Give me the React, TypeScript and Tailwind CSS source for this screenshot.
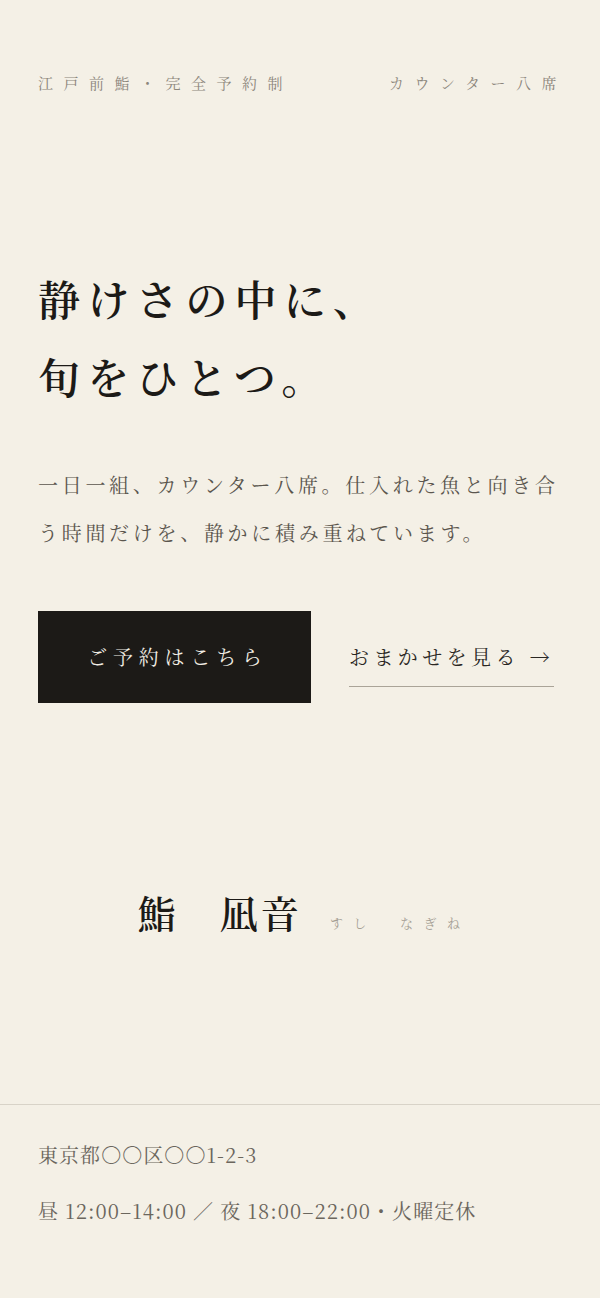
const serif = '"Noto Serif CJK JP", "Liberation Serif", serif';

export default function App() {
  return (
    <div
      className="min-h-screen bg-[#f4f0e6] text-[#1c1a17]"
      style={{ fontFamily: serif }}
    >
      <header className="flex justify-between pl-[38px] pr-[33px] pt-[72px] text-[15px] leading-[22px] tracking-[0.7em] text-[#8c867c]">
        <span>江戸前鮨・完全予約制</span>
        <span>カウンター八席</span>
      </header>

      <main className="px-[38px]">
        <h1 className="mt-[165px] text-[42px] font-semibold leading-[78px] tracking-[0.17em]">
          静けさの中に、
          <br />
          旬をひとつ。
        </h1>

        <p className="mt-[46px] text-[20px] leading-[48px] tracking-[0.185em] text-[#5b564e]">
          一日一組、カウンター八席。仕入れた魚と向き合う時間だけを、静かに積み重ねています。
        </p>

        <div className="mt-[54px] flex items-center gap-[38px]">
          <a className="flex h-[92px] w-[273px] items-center justify-center bg-[#1c1a17] pl-[6px] text-[20px] tracking-[0.29em] text-[#f1ede4]">
            ご予約はこちら
          </a>
          <a className="flex w-[205px] items-center border-b-[1.5px] border-[#aaa498] py-[14px] text-[20px] tracking-[0.22em] text-[#2a2723]">
            <span>おまかせを見る</span>
            <span className="ml-[10px] tracking-normal">→</span>
          </a>
        </div>
      </main>

      <section className="mt-[184px] flex items-baseline justify-center pl-[8px]">
        <span className="text-[38px] font-semibold leading-[50px] tracking-[0.08em]">
          鮨　凪音
        </span>
        <span className="ml-[28px] text-[13px] tracking-[0.8em] text-[#a39d92]">
          すし　なぎね
        </span>
      </section>

      <footer className="mt-[167px] border-t border-[#d8d3c8] px-[38px] pb-[74px] pt-[36px] text-[20px] leading-[28px] tracking-[0.053em] text-[#6b665d]">
        <p>東京都〇〇区〇〇1-2-3</p>
        <p className="mt-[28px]">昼 12:00–14:00 ／ 夜 18:00–22:00・火曜定休</p>
      </footer>
    </div>
  );
}
